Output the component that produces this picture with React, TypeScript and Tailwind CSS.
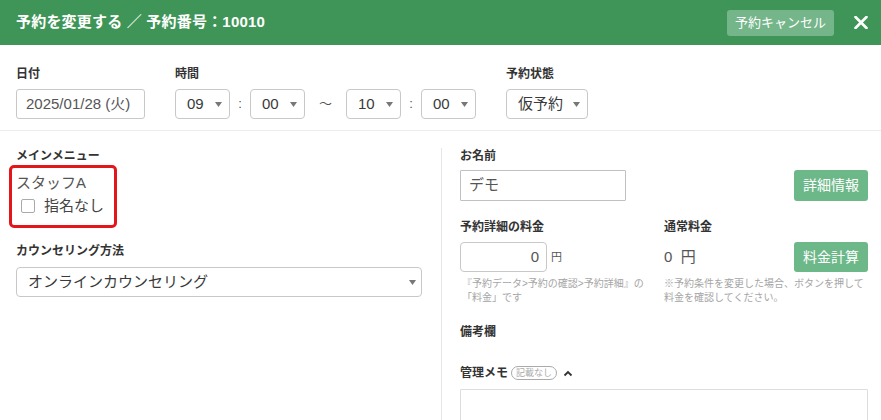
import React from "react";

const FONT = { fontFamily: '"Liberation Sans", "Noto Sans CJK JP", sans-serif' };

function Arrow() {
  return (
    <svg width="7" height="5" viewBox="0 0 7 5" className="shrink-0">
      <path d="M0 0 L7 0 L3.5 5 Z" fill="#777" />
    </svg>
  );
}

function Select({ value, w, pl = "pl-[11px]", pr = "pr-[7px]" }: { value: string; w: string; pl?: string; pr?: string }) {
  return (
    <div className={`${w} h-[30px] border border-[#c8c8c8] rounded-[4px] flex items-center justify-between ${pl} ${pr} text-[15px] text-[#3a3a3a] bg-white`}>
      <span>{value}</span>
      <Arrow />
    </div>
  );
}

function Label({ children, className = "" }: { children: React.ReactNode; className?: string }) {
  return <div className={`text-[12px] font-bold text-[#333] leading-[16px] ${className}`}>{children}</div>;
}

export default function App() {
  return (
    <div style={FONT} className="w-[881px] h-[420px] bg-white overflow-hidden text-[#333]">
      {/* Header */}
      <div className="h-[45px] bg-[#3f9557] flex items-center justify-between pl-4 pr-[13px]">
        <div className="text-white font-bold text-[15px] tracking-[0.2px]">予約を変更する ／ 予約番号：10010</div>
        <div className="flex items-center gap-[20px]">
          <div className="h-[26px] w-[107px] rounded-[3px] bg-[#74b589] text-white text-[13px] flex items-center justify-center">予約キャンセル</div>
          <svg width="14" height="13" viewBox="0 0 14 13">
            <path d="M1.5 1 L12.5 12 M12.5 1 L1.5 12" stroke="white" strokeWidth="2.6" strokeLinecap="round" />
          </svg>
        </div>
      </div>

      {/* Row 1 */}
      <div className="px-4 pt-[21px] pb-[11px] border-b border-[#ececec] flex gap-[30px]">
        <div>
          <Label className="mb-[7px]">日付</Label>
          <div className="w-[129px] h-[30px] border border-[#c8c8c8] rounded-[3px] flex items-center pl-[9px] text-[15px] text-[#555]">2025/01/28 (火)</div>
        </div>
        <div>
          <Label className="mb-[7px]">時間</Label>
          <div className="flex items-center">
            <Select value="09" w="w-[55px]" />
            <span className="w-[20px] text-center text-[13px] text-[#555]">:</span>
            <Select value="00" w="w-[55px]" />
            <span className="w-[41px] text-center text-[13px] text-[#555]">～</span>
            <Select value="10" w="w-[55px]" />
            <span className="w-[20px] text-center text-[13px] text-[#555]">:</span>
            <Select value="00" w="w-[55px]" />
          </div>
        </div>
        <div>
          <Label className="mb-[7px]">予約状態</Label>
          <Select value="仮予約" w="w-[82px]" />
        </div>
      </div>

      {/* Main */}
      <div className="flex mt-[17px]">
        {/* Left column */}
        <div className="w-[441px] pl-4 pr-[19px]">
          <Label>メインメニュー</Label>
          <div className="relative mt-[1px] h-[63px]">
            <div className="absolute left-[-7px] top-0 w-[108px] h-[63px] border-[3px] border-[#e3171b] rounded-[5px]" />
            <div className="pt-[8px] text-[15px] leading-[20px] text-[#555]">スタッフA</div>
            <div className="flex items-center mt-[3px] pl-[5px]">
              <span className="w-[14px] h-[14px] border border-[#aaa] rounded-[2px] bg-white" />
              <span className="ml-[9px] text-[15px] leading-[20px] text-[#444]">指名なし</span>
            </div>
          </div>
          <Label className="mt-[15px] mb-[8px]">カウンセリング方法</Label>
          <Select value="オンラインカウンセリング" w="w-full" pl="pl-[11px]" pr="pr-[5px]" />
        </div>

        {/* Right column */}
        <div className="flex-1 border-l border-[#e6e6e6] pl-[18px] pr-[13px] h-[273px]">
          <Label>お名前</Label>
          <div className="flex justify-between items-center mt-[6px]">
            <div className="w-[166px] h-[31px] border border-[#c0c0c0] rounded-[1px] flex items-center pl-[8px] text-[15px] text-[#555]">デモ</div>
            <div className="w-[74px] h-[31px] rounded-[3px] bg-[#6db889] text-white text-[14px] flex items-center justify-center">詳細情報</div>
          </div>

          <div className="flex mt-[18px]">
            <div className="w-[204px]">
              <Label>予約詳細の料金</Label>
              <div className="flex items-center mt-[7px]">
                <div className="w-[87px] h-[30px] border border-[#c8c8c8] rounded-[4px] flex items-center justify-end pr-[7px] text-[15px] text-[#555]">0</div>
                <span className="ml-[4px] text-[11px] text-[#555]">円</span>
              </div>
              <div className="mt-[5px] text-[10px] leading-[14px] text-[#a5a5a5] pl-[2px]">
                『予約データ&gt;予約の確認&gt;予約詳細』の<br />「料金」です
              </div>
            </div>
            <div className="flex-1">
              <Label>通常料金</Label>
              <div className="flex items-center justify-between mt-[7px]">
                <span className="text-[15px] text-[#555]">0&nbsp;&nbsp;円</span>
                <div className="w-[74px] h-[30px] rounded-[3px] bg-[#6db889] text-white text-[14px] flex items-center justify-center">料金計算</div>
              </div>
              <div className="mt-[5px] text-[10px] leading-[14px] text-[#a5a5a5]">
                ※予約条件を変更した場合、ボタンを押して<br />料金を確認してください。
              </div>
            </div>
          </div>

          <Label className="mt-[19px]">備考欄</Label>
          <div className="flex items-center mt-[25px] h-[16px]">
            <span className="text-[12px] font-bold text-[#333]">管理メモ</span>
            <span className="ml-[3px] h-[14px] px-[4px] border border-[#aaa] rounded-full text-[9px] leading-[12px] text-[#aaa] flex items-center">記載なし</span>
            <svg width="10" height="7" viewBox="0 0 10 7" className="ml-[6px]">
              <path d="M1.5 5.5 L5 2 L8.5 5.5" stroke="#333" strokeWidth="1.8" fill="none" />
            </svg>
          </div>
          <div className="mt-[8px] h-[60px] border border-[#ddd] rounded-[1px]" />
        </div>
      </div>
    </div>
  );
}
